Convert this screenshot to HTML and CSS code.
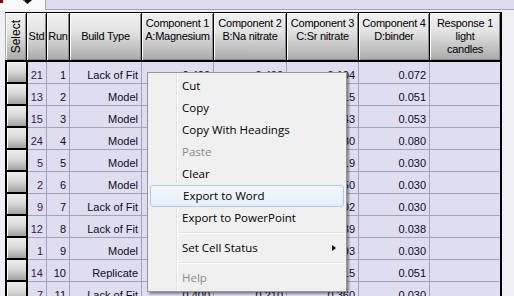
FILE: index.html
```html
<!DOCTYPE html>
<html>
<head>
<meta charset="utf-8">
<link rel="stylesheet" href="styles.css">
</head>
<body>
<div class="topbar">
  <div class="tab">
    <span class="redmark"></span>
    <svg class="arrow" width="9" height="4" viewBox="0 0 9 4"><polygon points="0,0 9,0 4.5,4" fill="#000"/><rect x="0" y="0" width="2" height="1" fill="#666"/></svg>
  </div>
  <div class="band"></div>
</div>
<div class="sheet">
  <div class="hdr">
    <div class="h w-sel"><span class="vt">Select</span></div>
    <div class="h w-std">Std</div>
    <div class="h w-run">Run</div>
    <div class="h w-bt">Build Type</div>
    <div class="h w-c1 top">Component 1<br>A:Magnesium<br>&nbsp;</div>
    <div class="h w-c2 top">Component 2<br>B:Na nitrate<br>&nbsp;</div>
    <div class="h w-c3 top">Component 3<br>C:Sr nitrate<br>&nbsp;</div>
    <div class="h w-c4 top">Component 4<br>D:binder<br>&nbsp;</div>
    <div class="h w-r1 top">Response 1<br>light<br>candles</div>
  </div>
  <div class="grid">
    <div class="row"><div class="sel"></div><div class="c d-std">21</div><div class="c d-run">1</div><div class="c d-bt">Lack of Fit</div><div class="c d-c1">0.420</div><div class="c d-c2">0.400</div><div class="c d-c3">0.104</div><div class="c d-c4">0.072</div><div class="c d-r1"></div></div>
    <div class="row"><div class="sel"></div><div class="c d-std">13</div><div class="c d-run">2</div><div class="c d-bt">Model</div><div class="c d-c1">0.400</div><div class="c d-c2">0.334</div><div class="c d-c3">0.215</div><div class="c d-c4">0.051</div><div class="c d-r1"></div></div>
    <div class="row"><div class="sel"></div><div class="c d-std">15</div><div class="c d-run">3</div><div class="c d-bt">Model</div><div class="c d-c1">0.404</div><div class="c d-c2">0.400</div><div class="c d-c3">0.143</div><div class="c d-c4">0.053</div><div class="c d-r1"></div></div>
    <div class="row"><div class="sel"></div><div class="c d-std">24</div><div class="c d-run">4</div><div class="c d-bt">Model</div><div class="c d-c1">0.400</div><div class="c d-c2">0.340</div><div class="c d-c3">0.180</div><div class="c d-c4">0.080</div><div class="c d-r1"></div></div>
    <div class="row"><div class="sel"></div><div class="c d-std">5</div><div class="c d-run">5</div><div class="c d-bt">Model</div><div class="c d-c1">0.431</div><div class="c d-c2">0.320</div><div class="c d-c3">0.219</div><div class="c d-c4">0.030</div><div class="c d-r1"></div></div>
    <div class="row"><div class="sel"></div><div class="c d-std">2</div><div class="c d-run">6</div><div class="c d-bt">Model</div><div class="c d-c1">0.400</div><div class="c d-c2">0.320</div><div class="c d-c3">0.250</div><div class="c d-c4">0.030</div><div class="c d-r1"></div></div>
    <div class="row"><div class="sel"></div><div class="c d-std">9</div><div class="c d-run">7</div><div class="c d-bt">Lack of Fit</div><div class="c d-c1">0.418</div><div class="c d-c2">0.250</div><div class="c d-c3">0.302</div><div class="c d-c4">0.030</div><div class="c d-r1"></div></div>
    <div class="row"><div class="sel"></div><div class="c d-std">12</div><div class="c d-run">8</div><div class="c d-bt">Lack of Fit</div><div class="c d-c1">0.450</div><div class="c d-c2">0.373</div><div class="c d-c3">0.139</div><div class="c d-c4">0.038</div><div class="c d-r1"></div></div>
    <div class="row"><div class="sel"></div><div class="c d-std">1</div><div class="c d-run">9</div><div class="c d-bt">Model</div><div class="c d-c1">0.457</div><div class="c d-c2">0.320</div><div class="c d-c3">0.193</div><div class="c d-c4">0.030</div><div class="c d-r1"></div></div>
    <div class="row"><div class="sel"></div><div class="c d-std">14</div><div class="c d-run">10</div><div class="c d-bt">Replicate</div><div class="c d-c1">0.400</div><div class="c d-c2">0.334</div><div class="c d-c3">0.215</div><div class="c d-c4">0.051</div><div class="c d-r1"></div></div>
    <div class="row"><div class="sel"></div><div class="c d-std">7</div><div class="c d-run">11</div><div class="c d-bt">Lack of Fit</div><div class="c d-c1">0.400</div><div class="c d-c2">0.210</div><div class="c d-c3">0.360</div><div class="c d-c4">0.030</div><div class="c d-r1"></div></div>
  </div>
</div>

<div class="menu">
  <div class="mi">Cut</div>
  <div class="mi">Copy</div>
  <div class="mi">Copy With Headings</div>
  <div class="mi dis">Paste</div>
  <div class="mi">Clear</div>
  <div class="mi hot">Export to Word</div>
  <div class="mi">Export to PowerPoint</div>
  <div class="msep"></div>
  <div class="mi sub">Set Cell Status<span class="subarrow"></span></div>
  <div class="msep"></div>
  <div class="mi dis">Help</div>
</div>
</body>
</html>
```

FILE: styles.css
```css
html, body {
  margin: 0;
  padding: 0;
}
body {
  width: 514px;
  height: 296px;
  overflow: hidden;
  background: #f0f0f4;
  font-family: "Liberation Sans", Arial, sans-serif;
  font-size: 11px;
  color: #000;
  position: relative;
}

/* top strip */
.topbar {
  display: flex;
  height: 10px;
}
.tab {
  width: 45px;
  height: 10px;
  background: #f9f9f9;
  border-right: 1px solid #a8a8b0;
  position: relative;
}
.redmark {
  position: absolute;
  left: 0;
  top: 0;
  width: 3px;
  height: 3px;
  background: #8b0000;
}
.arrow {
  position: absolute;
  left: 23px;
  top: 0;
}
.band {
  flex: 1;
  height: 9px;
  background: #dcdcee;
  border-bottom: 1px solid #a4a4b8;
}

/* sheet */
.sheet {
  margin: 2px 0 0 5px;
  width: 497px;
}
.hdr {
  display: flex;
  gap: 1px;
  background: #000;
  padding-top: 1px;
  height: 48px;
  box-sizing: border-box;
}
.h {
  height: 47px;
  box-sizing: border-box;
  background: linear-gradient(#f1f1f1 0%, #e3e3e3 40%, #a9a9a9 100%);
  box-shadow: inset 1px 1px 0 #ffffff, inset -1px -1px 0 #8a8a8a;
  display: flex;
  align-items: center;
  justify-content: center;
  text-align: center;
  line-height: 13px;
  color: #000;
  letter-spacing: -0.25px;
  white-space: nowrap;
}
.w-sel { width: 21px; border-left: 1px solid #a8a8a8; }
.w-std { width: 19px; }
.w-run { width: 22px; }
.w-bt  { width: 71px; }
.w-c1  { width: 71px; }
.w-c2  { width: 72px; }
.w-c3  { width: 71px; }
.w-c4  { width: 70px; }
.w-r1  { width: 70px; }

.vt {
  writing-mode: vertical-rl;
  transform: rotate(180deg);
  font-size: 12px;
  letter-spacing: 0;
}

.grid {
  border: 2px solid #000;
  border-bottom: none;
}
.row {
  display: flex;
  height: 22px;
}
.sel {
  width: 19px;
  height: 22px;
  box-sizing: border-box;
  border-right: 2px solid #000;
  border-bottom: 2px solid #000;
  width: 21px;
  background: linear-gradient(#eeeeee 0%, #d6d6d6 50%, #a2a2a2 100%);
  box-shadow: inset 1px 0 0 #ffffff;
}
.c {
  height: 22px;
  box-sizing: border-box;
  background: #dedef0;
  border-right: 1px solid #a2a2ba;
  border-bottom: 1px solid #a2a2ba;
  text-align: right;
  padding: 7px 3px 0 0;
  line-height: 13px;
  white-space: nowrap;
  overflow: hidden;
  color: #0c0c24;
}
.d-std { width: 19px; color: #3c1450; }
.d-run { width: 23px; }
.d-bt  { width: 72px; }
.d-c1  { width: 72px; }
.d-c2  { width: 73px; }
.d-c3  { width: 72px; }
.d-c4  { width: 71px; }
.d-r1  { width: 70px; border-right: none; }

/* context menu */
.menu {
  position: absolute;
  left: 147px;
  top: 72px;
  width: 200px;
  box-sizing: border-box;
  padding: 2px 0;
  background: #f0f0f0;
  border: 1px solid #979797;
  box-shadow: 2px 2px 2px rgba(0, 0, 0, 0.4);
  font-family: "Open Sans", "Noto Sans", sans-serif;
  font-size: 11.5px;
  color: #000;
}
.menu::before {
  content: "";
  position: absolute;
  left: 28px;
  top: 0;
  bottom: 0;
  width: 1px;
  background: #e2e3e3;
  box-shadow: 1px 0 0 #ffffff;
}
.mi {
  position: relative;
  height: 22px;
  line-height: 22px;
  padding-left: 34px;
  white-space: nowrap;
}
.mi.dis {
  color: #8a8a8a;
}
.mi.hot {
  margin: 0 2px;
  padding-left: 32px;
  height: 22px;
  box-sizing: border-box;
  line-height: 20px;
  border: 1px solid #aecbee;
  border-radius: 3px;
  background: linear-gradient(#f3f7fc, #e6eef9);
}
.msep {
  position: relative;
  height: 8px;
}
.msep::after {
  content: "";
  position: absolute;
  left: 30px;
  right: 1px;
  top: 3px;
  height: 1px;
  background: #e2e3e3;
  box-shadow: 0 1px 0 #ffffff;
}
.subarrow {
  position: absolute;
  right: 10px;
  top: 8px;
  width: 0;
  height: 0;
  border-left: 4px solid #000;
  border-top: 3.5px solid transparent;
  border-bottom: 3.5px solid transparent;
}
```
